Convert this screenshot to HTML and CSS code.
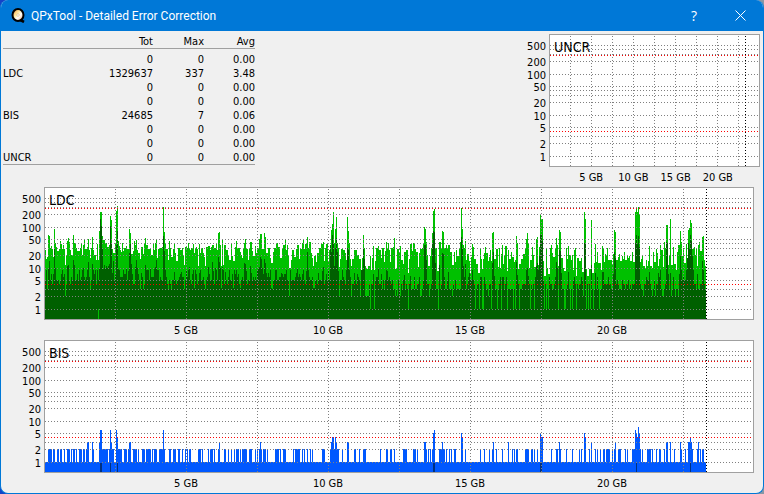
FILE: index.html
```html
<!DOCTYPE html>
<html lang="en">
<head>
<meta charset="utf-8">
<title>QPxTool - Detailed Error Correction</title>
<link rel="stylesheet" href="styles.css">
</head>
<body>
<div class="window">
  <header class="titlebar">
    <svg class="logo" viewBox="0 0 14 15" aria-hidden="true">
      <defs>
        <linearGradient id="disc" x1="0" y1="0" x2="1" y2="1">
          <stop offset="0" stop-color="#e8862a"/>
          <stop offset=".4" stop-color="#ffe9a0"/>
          <stop offset=".6" stop-color="#fff"/>
          <stop offset="1" stop-color="#f09a50"/>
        </linearGradient>
      </defs>
      <path d="M8.500 11.500 L13 14" stroke="#000" stroke-width="2.600"/>
      <ellipse cx="7" cy="7" rx="5.500" ry="6" fill="url(#disc)" stroke="#000" stroke-width="2"/>
      <circle cx="7" cy="7" r="1.300" fill="#fff" stroke="#d8b070" stroke-width=".6"/>
    </svg>
    <h1 class="title">QPxTool - Detailed Error Correction</h1>
    <button class="winbtn" type="button" aria-label="Help">?</button>
    <button class="winbtn" type="button" aria-label="Close">
      <svg class="cross" viewBox="0 0 11 11"><path d="M.5 .5 L10.5 10.5 M10.5 .5 L.5 10.5" stroke="#fff" fill="none"/></svg>
    </button>
  </header>
  <main class="content">
    <div class="top">
      <table class="stats">
        <thead><tr><th></th><th>Tot</th><th>Max</th><th>Avg</th></tr></thead>
        <tbody>
          <tr><th></th><td>0</td><td>0</td><td>0.00</td></tr>
          <tr><th>LDC</th><td>1329637</td><td>337</td><td>3.48</td></tr>
          <tr><th></th><td>0</td><td>0</td><td>0.00</td></tr>
          <tr><th></th><td>0</td><td>0</td><td>0.00</td></tr>
          <tr><th>BIS</th><td>24685</td><td>7</td><td>0.06</td></tr>
          <tr><th></th><td>0</td><td>0</td><td>0.00</td></tr>
          <tr><th></th><td>0</td><td>0</td><td>0.00</td></tr>
          <tr><th>UNCR</th><td>0</td><td>0</td><td>0.00</td></tr>
        </tbody>
      </table>
      <section class="chart chart-small" data-name="UNCR" data-width="209"></section>
    </div>
    <section class="chart" data-name="LDC" data-width="708"></section>
    <section class="chart" data-name="BIS" data-width="708"></section>
  </main>
</div>
<script src="charts.js"></script>
</body>
</html>
```
FILE: styles.css
```css
* { box-sizing: border-box; }

body {
  margin: 0;
  background: linear-gradient(90deg, #1444c8, #8a97a5);
  font-family: "DejaVu Sans Condensed", "DejaVu Sans", sans-serif;
  font-size: 11px;
  line-height: 14px;
  color: #000;
}

.window {
  display: flex;
  flex-direction: column;
  min-height: 100vh;
  border: 1px solid #0078d7;
  border-top: 0;
  border-radius: 8px;
  background: #f0f0f0;
  overflow: hidden;
}

.titlebar {
  display: flex;
  align-items: center;
  height: 31px;
  padding-left: 10px;
  background: #0078d7;
  color: #fff;
}

.logo { width: 14px; height: 15px; }

.title {
  flex: 1;
  margin: 0 0 0 6px;
  font: 400 12px/16px Roboto, "Open Sans", sans-serif;
}

.winbtn {
  display: flex;
  align-items: center;
  justify-content: center;
  width: 46px;
  height: 31px;
  padding: 0;
  border: 0;
  background: none;
  color: #fff;
  font: 400 14px/16px "Open Sans", "Noto Sans", sans-serif;
}

.cross { width: 11px; height: 11px; }

.content { padding: 3px 3px 0 2px; }

.top {
  display: flex;
  justify-content: space-between;
  align-items: flex-start;
}

.stats {
  width: 252px;
  border-collapse: collapse;
  table-layout: fixed;
}

.stats th,
.stats td {
  height: 14px;
  padding: 2px 0 0;
  line-height: 12px;
  font-weight: 400;
  text-align: right;
}

.stats th:first-child { width: 99px; text-align: left; }
.stats thead th { border-bottom: 1px solid #a0a0a0; }
.stats tbody { border-bottom: 1px solid #a0a0a0; }
.stats tbody::before { content: ""; display: block; height: 3px; }

.chart {
  display: grid;
  grid-template-columns: 38px 1fr;
  grid-template-rows: 133px 20px;
  column-gap: 3px;
  margin-right: 6px;
}

.chart-small {
  width: 234px;
  grid-template-columns: 20px 1fr;
  margin-right: 0;
}

.y-axis {
  display: grid;
  grid-template-rows: 16px 13px 12px 16px 13px 12px 16px 13px 12px;
  align-content: start;
  margin: 0;
  padding: 6px 0 0;
  list-style: none;
  text-align: right;
}

.plot {
  position: relative;
  border: 1px solid #a0a0a0;
  background: #fff;
}

.plot svg { display: block; width: 100%; height: 131px; }

.plot-name {
  position: absolute;
  top: 4px;
  left: 4px;
  margin: 0;
  font-size: 14px;
  line-height: 16px;
  font-weight: 400;
}

.x-axis {
  grid-column: 2;
  display: grid;
  grid-template-columns: repeat(4, 1fr);
  margin: 0;
  padding: 4px 10% 0;
  list-style: none;
  text-align: center;
}
```
FILE: charts.js
```js
// Plot coordinates: columns start at FIRST, rows count down from the top of the plot.
const FIRST = 45, LAST = 705, HEIGHT = 131;
const GRID = [10, 14, 19, 26, 39, 51, 55, 60, 67, 80, 92, 101, 108, 121];
const LIMITS = [20, 96];
const toRow = v => Math.round((v - 25) / 3);

// "column:level" pairs; a level holds until the next pair.
const LDC_TOP = `45:210 46:237 47:232 48:165 49:170 50:205 51:198 52:208 53:233 54:147 55:190 56:202 57:215 59:207 60:183 61:193 62:207 63:195 64:207 65:255 66:230 67:185 68:175 69:187 70:211 71:226 73:165 74:190 76:205 77:215 80:205 81:190 82:225 83:195 84:180 85:208 87:203 88:178 89:210 90:235 91:205 92:172 93:211 94:225 96:240 97:192 98:240 99:155 100:97 102:168 103:181 105:190 107:202 109:195 110:108 111:121 112:207 113:219 115:190 116:93 117:78 118:184 119:198 120:210 121:218 122:190 123:215 124:205 126:199 127:209 129:148 130:160 131:222 133:213 134:184 135:195 136:180 137:210 138:219 140:237 141:202 143:222 144:190 145:174 146:195 148:209 150:205 151:225 153:193 154:210 155:189 156:179 157:234 158:208 160:204 162:201 163:82 164:157 165:192 166:209 168:242 169:183 170:206 171:233 173:208 174:190 175:220 176:245 178:205 180:211 182:205 183:225 184:257 185:201 187:206 188:189 189:204 190:211 191:204 193:194 194:221 195:209 196:202 197:208 198:258 199:192 200:220 201:206 203:220 204:231 205:258 206:201 208:199 210:211 211:202 212:196 214:206 216:191 217:211 218:159 219:156 220:196 221:258 222:178 223:255 224:196 226:211 228:226 229:240 231:192 232:229 233:245 235:202 236:183 237:205 240:217 241:226 242:236 243:205 244:190 245:178 246:207 248:240 249:205 250:186 252:213 253:230 255:198 256:221 257:205 259:178 260:163 262:207 264:159 265:172 266:220 268:206 270:236 271:249 273:217 274:205 276:190 278:202 280:235 282:209 283:196 285:178 286:211 287:196 288:230 289:264 291:242 292:211 294:231 296:209 297:196 299:238 300:207 302:190 303:182 304:208 305:193 307:173 308:206 309:186 311:220 312:235 313:258 314:228 316:248 317:219 319:206 321:193 323:188 324:245 325:206 326:192 328:245 329:210 331:151 332:133 333:97 334:189 335:147 336:111 337:189 338:205 339:263 340:239 341:207 343:211 345:221 346:240 347:112 348:154 349:190 350:237 351:258 352:238 354:212 356:211 357:227 359:237 361:273 362:236 363:165 364:206 365:258 366:268 368:259 370:230 371:270 372:234 373:198 374:272 375:244 376:204 378:199 379:211 381:236 382:204 384:246 385:214 386:186 387:208 388:190
389:210 390:246 391:205 393:201 394:174 395:268 397:207 399:219 400:198 401:240 403:253 404:217 406:210 408:281 409:238 410:192 412:214 413:191 415:209 416:218 418:263 419:219 420:207 422:205 423:193 424:141 425:148 426:188 427:225 428:258 430:230 431:206 432:161 433:94 434:89 435:206 437:275 439:187 441:207 442:153 443:158 444:206 446:196 447:208 448:196 450:217 452:255 454:218 455:246 456:210 457:230 459:209 460:188 461:84 462:149 463:195 464:206 465:183 466:242 467:222 469:244 470:280 471:231 472:193 473:202 474:237 476:254 478:280 480:207 481:238 482:269 483:238 484:221 485:201 486:219 488:243 489:231 490:212 491:245 492:159 493:156 494:239 496:208 498:261 499:206 500:265 501:222 502:196 503:254 504:230 505:198 507:274 508:210 509:238 511:218 512:232 514:247 515:240 516:170 517:190 518:267 519:254 521:237 523:222 525:208 526:177 527:159 528:193 529:265 530:242 532:201 533:226 534:261 536:178 537:173 538:256 539:202 540:105 541:119 543:245 544:290 546:204 547:266 548:284 550:205 551:195 552:220 553:233 555:206 556:175 557:195 558:260 559:150 560:157 561:235 563:266 564:275 566:205 567:239 568:198 569:225 571:242 572:225 573:270 574:211 575:206 576:290 577:235 579:243 581:234 582:276 584:97 585:118 586:268 587:289 589:267 591:121 592:280 594:250 595:194 596:247 597:216 598:250 601:272 602:198 603:205 604:247 605:222 606:227 607:204 608:241 612:252 613:224 614:151 615:158 616:240 618:231 619:223 620:244 622:230 623:237 624:217 625:242 627:229 628:234 629:228 630:245 632:217 633:248 635:98 636:84 637:97 638:81 639:103 640:247 641:239 642:227 643:260 645:264 646:241 647:258 648:245 649:199 650:258 652:266 653:216 654:247 656:208 657:221 658:260 659:239 660:197 661:210 663:263 664:186 665:204 666:135 668:257 669:228 670:118 671:256 673:202 674:252 676:270 677:218 678:196 680:153 681:187 682:228 683:206 684:251 686:192 687:249 688:150 689:144 690:121 691:129 692:208 694:201 695:225 696:204 697:258 698:196 699:188 700:215 702:173 703:168 704:240 705:258`;
const LDC_DARK_PEAKS = `48:268 49:245 53:283 54:208 55:265 62:270 67:260 68:255 73:240 74:256 79:272 83:265 87:270 88:246 92:254 93:271 99:265 100:118 101:139 102:205 103:267 104:255 105:267 106:258 107:266 108:260 109:254 110:140 111:190 112:280 113:245 115:285 116:195 117:155 118:268 123:270 126:265 128:275 129:220 130:193 131:254 135:263 136:240 137:265 141:280 145:256 147:270 150:264 154:267 155:261 156:241 163:170 164:214 165:272 168:275 174:278 181:276 188:270 189:262 193:270 199:280 208:263 212:248 213:275 215:264 216:270 218:232 219:248 220:265 222:262 225:278 235:282 236:270 244:249 245:254 246:275 250:258 251:280 257:270 258:264 259:262 260:232 261:238 262:265 264:238 265:249 266:280 268:281 276:270 281:280 286:270 296:281 297:266 302:282 306:275 307:218 308:270 318:281 322:275 323:262 330:195 331:218 332:166 333:192 334:260 335:205 336:175 337:218 338:274 346:270 347:206 348:210 349:270 354:280 362:270 363:205 364:238 378:267 386:270 387:275 397:280 404:285 410:290 424:195 425:195 426:240 432:190 433:155 434:158 435:250 439:255 442:220 443:222 448:278 461:173 462:205 463:260 465:252 469:280 472:270 492:249 493:216 494:290 515:265 516:247 517:285 526:270 527:265 528:290 536:260 537:250 538:270 539:230 540:165 541:167 542:185 556:246 557:265 559:212 560:214 561:280 568:278 584:190 585:192 591:255 595:280 602:278 603:278 613:283 614:218 615:235 635:190 636:165 637:192 638:170 639:201 649:276 658:280 660:270 666:188 667:190 668:282 670:280 679:282 680:228 681:271 686:270 687:235 688:190 689:207 690:165 691:185 692:230 693:270 697:282 702:245 703:270`;
const LDC_NOTCHES = `47:328 52:313 65:348 70:313 90:328 96:313 140:328 143:328 168:328 171:328 184:328 194:325 205:328 221:325 233:325 240:325 271:325 272:328 289:348 313:325 314:325 339:349 351:349 360:349 365:349 366:349 367:349 368:349 370:387 374:387 382:328 384:328 395:349 397:349 400:349 408:387 420:349 421:349 429:349 438:387 452:349 475:387 479:387 482:387 483:387 488:349 491:387 497:387 501:387 507:387 513:387 515:387 519:387 530:387 534:387 544:387 546:387 548:387 558:387 564:387 565:387 570:387 572:387 576:387 583:349 586:387 588:387 590:387 593:387 599:387 643:349 652:349 655:349 662:349 663:349 671:349 675:349 678:349`;
const BIS_RUNS = `48-51 53-54 57-58 60-61 64-64 67-69 71-71 73-74 76-76 79-81 83-84 86-88 92-93 99-107 109-113 116-118 119-121 124-126 128-130 133-136 138-138 142-144 146-150 152-152 154-156 159-164 169-170 173-175 178-179 182-182 185-185 187-187 189-190 198-200 202-202 208-208 210-212 214-214 218-219 224-225 228-228 231-231 234-234 236-238 240-240 242-246 249-251 255-255 257-257 259-261 263-265 267-267 275-278 280-280 283-285 293-293 295-299 302-302 304-304 307-307 310-310 312-312 322-324 330-338 342-342 347-348 354-355 359-359 363-365 380-380 386-387 390-391 394-394 403-406 413-415 417-417 424-426 428-428 430-430 432-434 439-444 446-446 449-449 451-451 454-455 461-462 465-465 480-480 484-484 489-489 492-493 496-496 502-502 508-508 512-512 514-514 516-517 525-528 531-532 534-534 537-537 540-542 551-551 556-557 559-560 566-566 572-572 579-579 581-581 584-585 589-589 591-591 595-595 597-597 600-600 603-604 606-609 612-612 614-615 618-620 625-625 627-627 632-640 642-642 647-650 652-652 656-656 659-660 664-664 666-667 670-670 674-674 680-681 685-685 688-692 697-698 700-700 702-703`;
const BIS_PEAKS = `87:3 88:3 92:3 99:3 100:6 101:6 110:6 111:3 116:6 117:4 129:3 130:3 163:6 219:3 260:3 331:3 332:4 333:4 335:4 336:3 347:3 348:3 424:3 425:3 433:5 434:6 442:3 461:5 462:4 493:3 508:3 540:5 541:4 542:4 559:3 584:5 585:4 591:3 615:3 635:6 636:5 637:4 638:7 639:5 666:3 667:3 670:3 680:3 688:3 689:3 690:4 691:3 698:3`;
const BIS_AVERAGE = [100, 101, 110, 117, 433, 434, 540, 541, 636, 690];
const LEVEL_ROW = { 1: 121, 2: 108, 3: 101, 4: 96, 5: 92, 6: 89, 7: 86 };

const pairs = text => text.trim().split(/\s+/).map(p => p.split(":").map(Number));

function bars(rows, fill) {
  let d = "";
  rows.forEach((top, i) => { d += `M${i} ${HEIGHT}V${top}h1V${HEIGHT}z`; });
  return `<path fill="${fill}" d="${d}"/>`;
}

function ldc() {
  const n = LAST - FIRST + 1, tops = [], dark = [];
  const top = new Map(pairs(LDC_TOP));
  const levels = [271, 283, 292, 292, 301, 301, 301, 313];
  const low = [292, 301, 313, 313, 328, 328, 313, 328];
  let held = 210, seed = 11;
  for (let i = 0; i < n; i++) {
    if (top.has(i + FIRST)) held = top.get(i + FIRST);
    tops.push(toRow(held));
    seed = (seed * 1103515245 + 12345) % 2147483648;
    dark.push(toRow((i + FIRST < 390 ? levels : low)[(seed >> 16) & 7]));
  }
  for (const [x, v] of pairs(LDC_DARK_PEAKS + " " + LDC_NOTCHES)) dark[x - FIRST] = toRow(v);
  return bars(tops, "#00c000") + bars(dark, "#006000") +
    `<path fill="#00c000" d="M53 121h1v10h-1z"/>`;
}

function bis() {
  const rows = new Array(LAST - FIRST + 1).fill(LEVEL_ROW[1]);
  for (const run of BIS_RUNS.split(" ")) {
    const [a, b] = run.split("-").map(Number);
    for (let x = a; x <= b; x++) rows[x - FIRST] = LEVEL_ROW[2];
  }
  for (const [x, level] of pairs(BIS_PEAKS)) rows[x - FIRST] = LEVEL_ROW[level];
  return bars(rows, "#0058ff") +
    BIS_AVERAGE.map(x => `<path fill="#003080" d="M${x - FIRST} 122h1v9h-1z"/>`).join("");
}

function grid(width) {
  const small = width < 300, step = small ? 21 : 71, first = small ? 20 : 70;
  const end = small ? 195 : 661;
  const line = (x1, y1, x2, y2, c) =>
    `<path d="M${x1} ${y1}L${x2} ${y2}" stroke="${c}" stroke-dasharray="1 2"/>`;
  let out = "";
  for (const y of GRID) out += line(0, y + .5, width - 1, y + .5, "#808080");
  for (let i = 0; i < 9; i++) out += line(first + i * step + .5, 1, first + i * step + .5, HEIGHT, "#808080");
  for (const y of LIMITS) out += line(0, y + .5, width - 1, y + .5, "#ff0000");
  return out + line(end + .5, 1, end + .5, HEIGHT, "#000");
}

const series = { LDC: ldc, BIS: bis, UNCR: () => "" };
for (const el of document.querySelectorAll(".chart")) {
  const { name, width } = el.dataset;
  const item = t => `<li>${t}</li>`;
  el.innerHTML =
    `<ol class="y-axis">${[500, 200, 100, 50, 20, 10, 5, 2, 1].map(item).join("")}</ol>
     <div class="plot">
       <svg viewBox="0 0 ${width} ${HEIGHT}" preserveAspectRatio="none" shape-rendering="crispEdges" aria-hidden="true">${series[name]()}${grid(+width)}</svg>
       <h2 class="plot-name">${name}</h2>
     </div>
     <ol class="x-axis">${["5 GB", "10 GB", "15 GB", "20 GB"].map(item).join("")}</ol>`;
}
```
